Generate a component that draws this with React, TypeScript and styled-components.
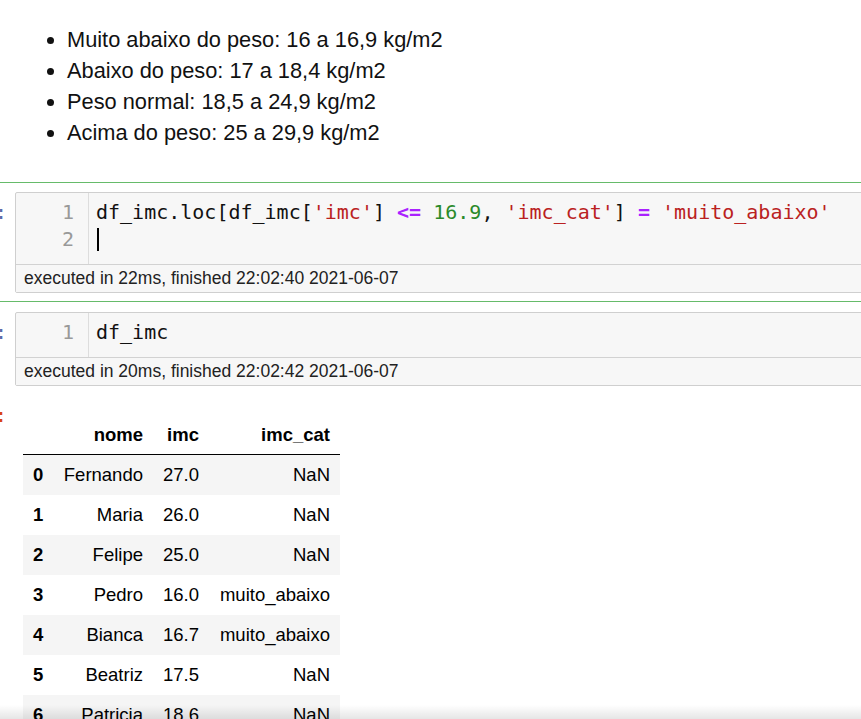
import styled, { createGlobalStyle } from 'styled-components';

const GlobalStyle = createGlobalStyle`
  html, body {
    margin: 0;
    padding: 0;
    background: #fff;
    overflow: hidden;
  }
  body {
    font-family: "Liberation Sans", Arial, sans-serif;
    color: #000;
  }
`;

type Token = { t: string; k?: 'str' | 'num' | 'op' };

const codeCell1: Token[][] = [
  [
    { t: 'df_imc.loc[df_imc[' },
    { t: "'imc'", k: 'str' },
    { t: '] ' },
    { t: '<=', k: 'op' },
    { t: ' ' },
    { t: '16.9', k: 'num' },
    { t: ', ' },
    { t: "'imc_cat'", k: 'str' },
    { t: '] ' },
    { t: '=', k: 'op' },
    { t: ' ' },
    { t: "'muito_abaixo'", k: 'str' },
  ],
  [],
];

const codeCell2: Token[][] = [[{ t: 'df_imc' }]];

const rows = [
  ['0', 'Fernando', '27.0', 'NaN'],
  ['1', 'Maria', '26.0', 'NaN'],
  ['2', 'Felipe', '25.0', 'NaN'],
  ['3', 'Pedro', '16.0', 'muito_abaixo'],
  ['4', 'Bianca', '16.7', 'muito_abaixo'],
  ['5', 'Beatriz', '17.5', 'NaN'],
  ['6', 'Patricia', '18.6', 'NaN'],
];

const CodeCell = ({ lines, timing, selected, cursorLine }: { lines: Token[][]; timing: string; selected?: boolean; cursorLine?: number }) => (
  <Cell $selected={selected}>
    <Prompt>In [5]:</Prompt>
    <InputBox>
      <Editor>
        <Gutter>
          {lines.map((_, i) => (
            <LineNo key={i}>{i + 1}</LineNo>
          ))}
        </Gutter>
        <Code>
          {lines.map((line, i) => (
            <CodeLine key={i}>
              {line.map((tok, j) => (
                <Tok key={j} $kind={tok.k}>{tok.t}</Tok>
              ))}
              {cursorLine === i && <Cursor />}
            </CodeLine>
          ))}
        </Code>
      </Editor>
      <Timing>{timing}</Timing>
    </InputBox>
  </Cell>
);

export default function App() {
  return (
    <Page>
      <GlobalStyle />
      <Markdown>
        <BulletList>
          <li>Muito abaixo do peso: 16 a 16,9 kg/m2</li>
          <li>Abaixo do peso: 17 a 18,4 kg/m2</li>
          <li>Peso normal: 18,5 a 24,9 kg/m2</li>
          <li>Acima do peso: 25 a 29,9 kg/m2</li>
        </BulletList>
      </Markdown>
      <CodeCell selected lines={codeCell1} cursorLine={1} timing="executed in 22ms, finished 22:02:40 2021-06-07" />
      <CodeCell lines={codeCell2} timing="executed in 20ms, finished 22:02:42 2021-06-07" />
      <OutputRow>
        <Prompt $out>Out[6]:</Prompt>
        <OutputArea>
          <DataTable>
            <colgroup>
              <col style={{ width: 30 }} />
              <col style={{ width: 100 }} />
              <col style={{ width: 56 }} />
              <col style={{ width: 131 }} />
            </colgroup>
            <thead>
              <tr>
                <HeadCell />
                <HeadCell>nome</HeadCell>
                <HeadCell>imc</HeadCell>
                <HeadCell>imc_cat</HeadCell>
              </tr>
            </thead>
            <tbody>
              {rows.map((r, i) => (
                <Row key={r[0]} $striped={i % 2 === 0}>
                  <IndexCell>{r[0]}</IndexCell>
                  <DataCell>{r[1]}</DataCell>
                  <DataCell>{r[2]}</DataCell>
                  <DataCell>{r[3]}</DataCell>
                </Row>
              ))}
            </tbody>
          </DataTable>
        </OutputArea>
      </OutputRow>
      <BottomShade />
    </Page>
  );
}

const Page = styled.div`
  height: 719px;
  overflow: hidden;
  position: relative;
`;

const Markdown = styled.div`
  padding: 24px 0 34px;
  height: 124px;
`;

const BulletList = styled.ul`
  margin: 0;
  padding-left: 67px;
  list-style: disc;
  font-size: 21.8px;
  line-height: 31px;
  color: #111;
`;

const Cell = styled.div<{ $selected?: boolean }>`
  display: flex;
  width: 920px;
  padding: 9px 0 8px;
  border-top: 1px solid ${(p) => (p.$selected ? '#66bb6a' : 'transparent')};
  border-bottom: 1px solid ${(p) => (p.$selected ? '#66bb6a' : 'transparent')};
`;

const Prompt = styled.div<{ $out?: boolean }>`
  flex: 0 0 15px;
  display: flex;
  justify-content: flex-end;
  overflow: hidden;
  white-space: nowrap;
  padding: 7px 8px 0 0;
  box-sizing: border-box;
  font-family: "DejaVu Sans Mono", monospace;
  font-size: 20px;
  line-height: 27px;
  height: 34px;
  color: ${(p) => (p.$out ? '#d84315' : '#5a6aa8')};
`;

const InputBox = styled.div`
  flex: 1;
  background: #f7f7f7;
  border: 1px solid #cfcfcf;
  border-radius: 2px;
`;

const Editor = styled.div`
  display: flex;
`;

const Gutter = styled.div`
  width: 72px;
  border-right: 1px solid #dddddd;
  padding: 6px 0 11px;
  box-sizing: content-box;
`;

const LineNo = styled.div`
  font-family: "DejaVu Sans Mono", monospace;
  font-size: 20px;
  line-height: 27px;
  color: #999;
  text-align: right;
  padding-right: 14px;
`;

const Code = styled.div`
  flex: 1;
  padding: 6px 0 11px 7px;
`;

const CodeLine = styled.div`
  font-family: "DejaVu Sans Mono", monospace;
  font-size: 20px;
  line-height: 27px;
  height: 27px;
  white-space: pre;
  color: #111;
  display: flex;
  align-items: center;
`;

const Tok = styled.span<{ $kind?: 'str' | 'num' | 'op' }>`
  white-space: pre;
  color: ${(p) => (p.$kind === 'str' ? '#ba2121' : p.$kind === 'num' ? '#2a8a2a' : p.$kind === 'op' ? '#aa22ff' : '#111')};
  font-weight: ${(p) => (p.$kind === 'op' ? 700 : 400)};
`;

const Cursor = styled.span`
  display: inline-block;
  width: 2px;
  height: 23px;
  background: #000;
  margin-left: 1px;
`;

const Timing = styled.div`
  border-top: 1px solid #d2d2d2;
  padding-left: 8px;
  font-size: 17.5px;
  line-height: 27px;
  color: #222;
  background: #f7f7f7;
`;

const OutputRow = styled.div`
  display: flex;
`;

const OutputArea = styled.div`
  padding: 20px 0 0 8px;
`;

const DataTable = styled.table`
  border-collapse: collapse;
  table-layout: fixed;
  width: 317px;
  font-size: 18.5px;
  color: #000;
`;

const HeadCell = styled.th`
  font-weight: 700;
  text-align: right;
  padding: 0 10px;
  height: 39px;
  border-bottom: 1px solid #000;
  white-space: nowrap;
`;

const Row = styled.tr<{ $striped?: boolean }>`
  background: ${(p) => (p.$striped ? '#f5f5f5' : '#fff')};
  height: 40px;
`;

const IndexCell = styled.th`
  font-weight: 700;
  text-align: right;
  padding: 0 10px;
  white-space: nowrap;
`;

const DataCell = styled.td`
  text-align: right;
  padding: 0 10px;
  white-space: nowrap;
`;

const BottomShade = styled.div`
  position: absolute;
  left: 0;
  right: 0;
  bottom: 0;
  height: 14px;
  background: linear-gradient(to bottom, rgba(0, 0, 0, 0), rgba(0, 0, 0, 0.1));
  pointer-events: none;
`;
